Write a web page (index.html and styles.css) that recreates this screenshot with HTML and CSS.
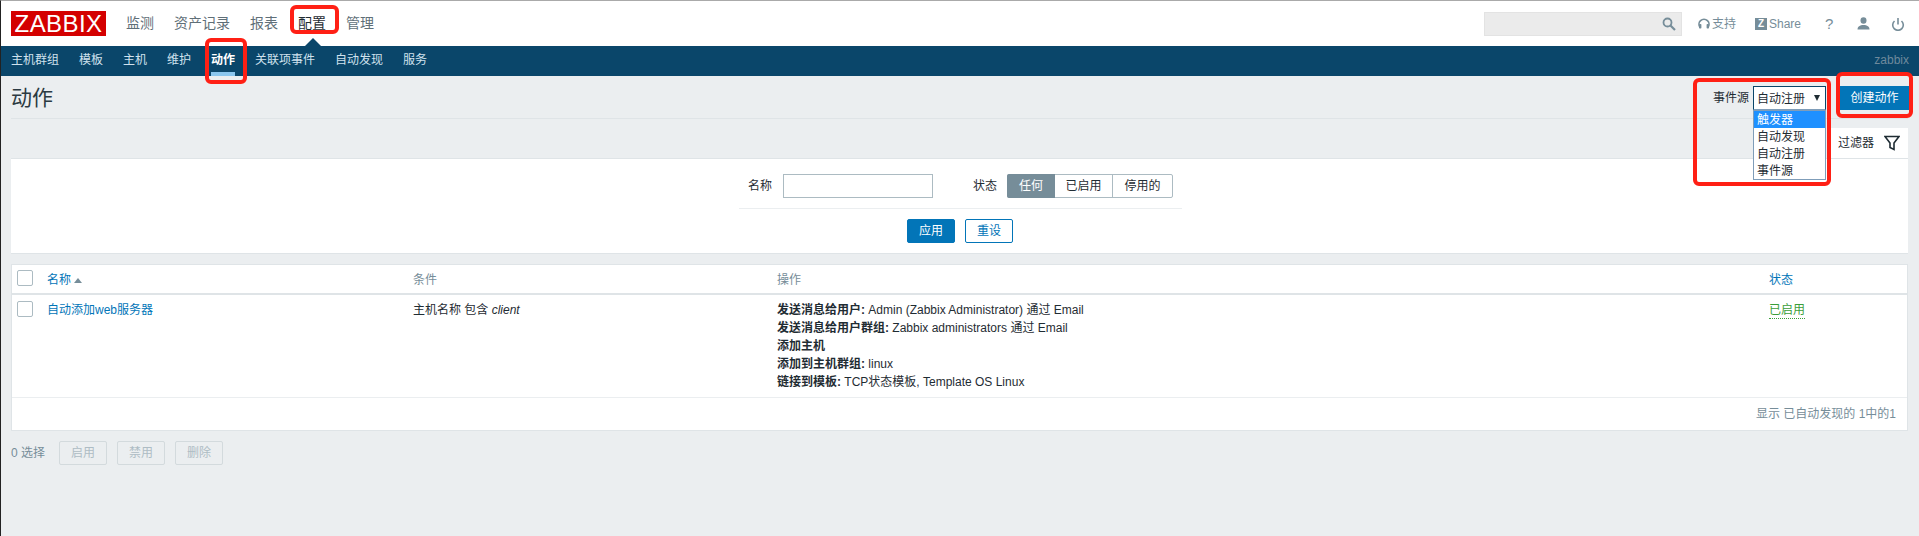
FILE: index.html
```html
<!DOCTYPE html>
<html lang="zh">
<head>
<meta charset="utf-8">
<title>动作</title>
<link rel="stylesheet" href="styles.css">
</head>
<body>
<div class="page">
  <header class="topbar">
    <div class="logo">ZABBIX</div>
    <nav class="mainnav">
      <a>监测</a><a>资产记录</a><a>报表</a><a class="current">配置</a><a>管理</a>
    </nav>
    <div class="tools">
      <div class="search">
        <svg class="search-icon" viewBox="0 0 14 14" width="14" height="14"><circle cx="5.5" cy="5.5" r="4" fill="none" stroke="#768d99" stroke-width="1.8"/><path d="M8.5 8.5 13 13" stroke="#768d99" stroke-width="2.2"/></svg>
      </div>
      <a class="tool tool-support">
        <svg viewBox="0 0 12 14" width="12" height="14"><path d="M2.200 10.500A5 5 0 1 1 9.800 10.500" fill="none" stroke="#768d99" stroke-width="1.700"/><rect x="1" y="7" width="2.400" height="4.500" rx="0.800" fill="#768d99"/><rect x="8.600" y="7" width="2.400" height="4.500" rx="0.800" fill="#768d99"/></svg>
        <span>支持</span>
      </a>
      <a class="tool tool-share">
        <span class="zbox">Z</span><span>Share</span>
      </a>
      <a class="tool tool-help">?</a>
      <a class="tool tool-user">
        <svg viewBox="0 0 13 13" width="13" height="13"><ellipse cx="6.500" cy="3.500" rx="3" ry="3.200" fill="#768d99"/><path d="M0.500 12.500c0-3 2.300-4.500 6-4.500s6 1.500 6 4.500z" fill="#768d99"/></svg>
      </a>
      <a class="tool tool-power">
        <svg viewBox="0 0 14 14" width="14" height="14"><path d="M3.500 4a5.300 5.300 0 1 0 7 0" fill="none" stroke="#768d99" stroke-width="1.600"/><path d="M7 1V7.500" stroke="#768d99" stroke-width="1.600"/></svg>
      </a>
    </div>
    <span class="nav-pointer"></span>
  </header>

  <nav class="subnav">
    <a>主机群组</a><a>模板</a><a>主机</a><a>维护</a><a class="selected">动作</a><a>关联项事件</a><a>自动发现</a><a>服务</a>
    <span class="server">zabbix</span>
  </nav>

  <main class="content">
    <div class="titlebar">
      <h1>动作</h1>
      <div class="controls">
        <label>事件源</label>
        <div class="select">
          <span>自动注册</span><i class="caret"></i>
          <ul class="options">
            <li class="hover">触发器</li>
            <li>自动发现</li>
            <li>自动注册</li>
            <li>事件源</li>
          </ul>
        </div>
        <button class="btn-create">创建动作</button>
      </div>
    </div>

    <div class="filter-tabs">
      <div class="filter-tab">
        <span>过滤器</span>
        <svg viewBox="0 0 16 16" width="16" height="16"><path d="M1 1.500h14L10 8v6.500l-4-2V8z" fill="none" stroke="#1f2c33" stroke-width="1.600"/></svg>
      </div>
    </div>

    <section class="filter">
      <div class="filter-row">
        <label class="f-name">名称</label>
        <div class="input"></div>
        <label class="f-status">状态</label>
        <div class="segments">
          <span class="seg on">任何</span><span class="seg s2">已启用</span><span class="seg s3">停用的</span>
        </div>
      </div>
      <div class="filter-actions">
        <button class="btn-apply">应用</button>
        <button class="btn-reset">重设</button>
      </div>
    </section>

    <section class="list">
      <div class="grid head">
        <div class="c-check"><span class="checkbox"></span></div>
        <div class="link">名称<i class="sort"></i></div>
        <div class="muted">条件</div>
        <div class="muted">操作</div>
        <div class="link">状态</div>
      </div>
      <div class="grid row">
        <div class="c-check"><span class="checkbox"></span></div>
        <div class="link">自动添加web服务器</div>
        <div>主机名称 包含 <em>client</em></div>
        <div class="ops">
          <p><b>发送消息给用户:</b> Admin (Zabbix Administrator) 通过 Email</p>
          <p><b>发送消息给用户群组:</b> Zabbix administrators 通过 Email</p>
          <p><b>添加主机</b></p>
          <p><b>添加到主机群组:</b> linux</p>
          <p><b>链接到模板:</b> TCP状态模板, Template OS Linux</p>
        </div>
        <div><span class="enabled">已启用</span></div>
      </div>
      <div class="list-foot">显示 已自动发现的 1中的1</div>
    </section>

    <div class="bulk">
      <span class="count">0 选择</span>
      <button>启用</button><button>禁用</button><button>删除</button>
    </div>
  </main>

  <div class="mark mark-config"></div>
  <div class="mark mark-action"></div>
  <div class="mark mark-source"></div>
  <div class="mark mark-create"></div>
</div>
</body>
</html>
```
FILE: styles.css
```css
* { box-sizing: border-box; }
html, body { margin: 0; height: 100%; }
body {
  font: 12px/14px "Liberation Sans", "Noto Sans CJK SC", sans-serif;
  color: #1f2c33;
  background: #ebeef0;
  overflow: hidden;
}
.page {
  position: relative;
  height: 536px;
  border-top: 1px solid #aaa;
  border-left: 1px solid #222;
}
.topbar {
  position: relative;
  height: 45px;
  background: #fff;
  display: flex;
  align-items: center;
  padding: 0 14px 0 10px;
}
.logo {
  width: 95px;
  height: 25px;
  background: #d40000;
  color: #fff;
  font-size: 24px;
  line-height: 25px;
  letter-spacing: 0.400px;
  text-align: center;
}
.mainnav { display: flex; gap: 20px; margin: -2px 0 0 20px; font-size: 14px; color: #5f6f78; }
.mainnav .current { color: #1f2c33; }
.tools { margin-left: auto; display: flex; align-items: center; color: #768d99; }
.search { position: relative; width: 198px; height: 24px; background: #ebebeb; border: 1px solid #e3e3e3; margin-right: 16px; }
.search-icon { position: absolute; right: 5px; top: 4px; }
.tool { display: flex; align-items: center; gap: 2px; }
.tool-support { width: 57px; }
.tool-share { width: 70px; }
.zbox { width: 12px; height: 12px; background: #768d99; color: #fff; font-size: 10px; line-height: 12px; font-weight: bold; text-align: center; }
.tool-help { width: 32px; font-size: 15px; }
.tool-user { width: 34px; }
.tool-power { width: 14px; }
.nav-pointer {
  position: absolute;
  left: 304px;
  bottom: 0;
  border: 8px solid transparent;
  border-top: 0;
  border-bottom-color: #0a466a;
}
.subnav {
  height: 30px;
  background: #0a466a;
  display: flex;
  gap: 20px;
  padding: 0 10px;
  color: #d0e2ee;
  line-height: 29px;
}
.subnav a { height: 30px; }
.subnav .selected { color: #fff; font-weight: bold; border-bottom: 4px solid #8ac6ee; }
.server { margin-left: auto; color: #6f8a9c; }
.content { padding: 0 11px 0 10px; }
.titlebar {
  height: 43px;
  border-bottom: 1px solid #dfe4e7;
  display: flex;
  justify-content: space-between;
}
h1 { margin: 0; font-size: 21px; font-weight: normal; line-height: 44px; color: #2b3a42; }
.controls { display: flex; align-items: flex-start; padding-top: 10px; margin-right: -1px; }
.controls label { line-height: 24px; margin-right: 4px; }
.select {
  position: relative;
  width: 73px;
  height: 24px;
  background: #fff;
  border: 1px solid #0a466a;
  border-bottom-color: #7f9db9;
  padding-left: 3px;
  line-height: 25px;
}
.caret {
  position: absolute;
  right: 5px;
  top: 8px;
  border: 3px solid transparent;
  border-top: 6px solid #1f2c33;
  border-bottom: 0;
}
.options {
  position: absolute;
  left: -1px;
  right: -1px;
  top: 23px;
  margin: 0;
  padding: 0;
  list-style: none;
  background: #fff;
  border: 1px solid #7f9db9;
  line-height: 18px;
  z-index: 2;
}
.options li { height: 17px; padding-left: 3px; }
.options .hover { background: #1e90ff; color: #fff; }
.btn-create {
  width: 69px;
  height: 24px;
  margin-left: 14px;
  border: 0;
  padding: 0;
  background: #0275b8;
  color: #fff;
  font: inherit;
}
.filter-tabs { display: flex; justify-content: flex-end; margin-top: 9px; }
.filter-tab {
  width: 78px;
  height: 30px;
  background: #fff;
  display: flex;
  align-items: center;
  gap: 10px;
  padding: 0 8px;
}
.filter {
  height: 96px;
  background: #fff;
  border-top: 1px solid #dfe4e7;
  border-bottom: 1px solid #dfe4e7;
}
.filter-row {
  width: 443px;
  height: 50px;
  margin-left: 728px;
  padding: 15px 0 0 9px;
  border-bottom: 1px solid #ebeef0;
  display: flex;
  align-items: flex-start;
}
.filter-row label { line-height: 24px; }
.input { width: 150px; height: 24px; margin-left: 11px; border: 1px solid #acbbc2; }
.f-status { margin-left: 40px; }
.segments {
  display: flex;
  margin-left: 10px;
  height: 24px;
  line-height: 22px;
  text-align: center;
  border: 1px solid #acbbc2;
  border-radius: 2px;
}
.seg.on { width: 48px; background: #768d99; color: #fff; margin: -1px 0 -1px -1px; line-height: 24px; border-radius: 2px 0 0 2px; }
.s2 { width: 58px; border-right: 1px solid #acbbc2; }
.s3 { width: 59px; }
.filter-actions { display: flex; justify-content: center; gap: 10px; padding-top: 10px; margin-left: 1px; }
.filter-actions button { width: 48px; height: 24px; padding: 0; font: inherit; border-radius: 2px; }
.btn-apply { background: #0275b8; color: #fff; border: 1px solid #0275b8; }
.btn-reset { background: #fff; color: #0275b8; border: 1px solid #0275b8; }
.list {
  margin-top: 10px;
  background: #fff;
  border: 1px solid #dfe4e7;
}
.grid { display: grid; grid-template-columns: 35px 366px 364px 992px 1fr; }
.head { height: 30px; line-height: 30px; border-bottom: 2px solid #dfe4e7; }
.row { height: 103px; padding-top: 6px; line-height: 18px; border-bottom: 1px solid #ebeef0; }
.c-check { padding-left: 5px; }
.head .c-check { padding-top: 5px; }
.checkbox { display: block; width: 16px; height: 16px; border: 1px solid #acbbc2; border-radius: 2px; background: #fff; }
.link { color: #0275b8; }
.muted { color: #768d99; }
.sort {
  display: inline-block;
  margin-left: 3px;
  border: 4px solid transparent;
  border-top: 0;
  border-bottom: 5px solid #768d99;
  vertical-align: 1px;
}
.ops p { margin: 0; height: 18px; }
.enabled { color: #3a9e3a; border-bottom: 1px dotted #3a9e3a; padding-bottom: 1px; }
.list-foot { height: 32px; line-height: 32px; text-align: right; color: #768d99; padding-right: 11px; }
.bulk { display: flex; align-items: center; margin-top: 10px; height: 24px; color: #768d99; }
.count { width: 48px; }
.bulk button {
  width: 48px;
  height: 24px;
  margin-right: 10px;
  padding: 0;
  font: inherit;
  color: #aebcc4;
  background: #ebeef0;
  border: 1px solid #d3dadd;
  border-radius: 2px;
}
.mark { position: absolute; border: 4px solid #ff2015; border-radius: 6px; z-index: 5; }
.mark-config { left: 289px; top: 4px; width: 49px; height: 29px; }
.mark-action { left: 204px; top: 37px; width: 42px; height: 46px; }
.mark-source { left: 1692px; top: 77px; width: 138px; height: 108px; }
.mark-create { left: 1835px; top: 71px; width: 77px; height: 46px; }
```
